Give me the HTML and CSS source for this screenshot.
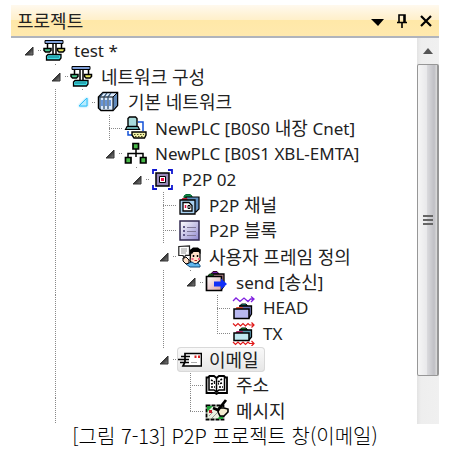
FILE: index.html
```html
<!DOCTYPE html>
<html lang="ko">
<head>
    <meta charset="UTF-8">
    <meta name="viewport" content="width=device-width, initial-scale=1.0">
    <title>프로젝트</title>
    <link rel="stylesheet" href="styles.css">
</head>
<body>
    <svg class="defs" aria-hidden="true">
        <defs>
            <linearGradient id="arrow-dark" x1="0" y1="0" x2="1" y2="1">
                <stop offset="0.4" stop-color="#222"/>
                <stop offset="1" stop-color="#888"/>
            </linearGradient>
            <linearGradient id="lilac" x1="0" y1="0" x2="1" y2="1">
                <stop offset="0" stop-color="#fff"/>
                <stop offset="1" stop-color="#9088d0"/>
            </linearGradient>
            <linearGradient id="pink" x1="0" y1="0" x2="1" y2="1">
                <stop offset="0" stop-color="#fff"/>
                <stop offset="1" stop-color="#d8a0a4"/>
            </linearGradient>
            <symbol id="toggle" viewBox="0 0 10 10">
                <path d="M9 1V9H1Z"/>
            </symbol>
            <symbol id="toggle-dark" viewBox="0 0 10 10">
                <path d="M9 1V9H1Z" fill="url(#arrow-dark)"/>
            </symbol>
            <symbol id="scales" viewBox="0 0 24 24">
                <path d="M2 1.500h18v3H2Z" fill="#7f9fd8" stroke="#000"/>
                <path d="M10 5v10M13 5v10M4.500 5v4M18.500 5v4" stroke="#000" stroke-width="1.500"/>
                <path d="M1 9.500h7v2L6.500 13h-4L1 11.500Z" fill="#4cc890" stroke="#000" stroke-width="1.500"/>
                <path d="M14.500 9.500h7v2L20 13h-4l-1.500-1.500Z" fill="#e8e860" stroke="#000" stroke-width="1.500"/>
                <path d="M5 15.500h13V19l-1.500 2h-13V17Z" fill="#40e0e8" stroke="#000" stroke-width="1.300"/>
                <path d="M5 18h11" stroke="#107080"/>
            </symbol>
        </defs>
    </svg>

    <div class="panel">
        <div class="panel-header">
            <h1>프로젝트</h1>
            <div class="panel-buttons">
                <button type="button" aria-label="메뉴"><svg width="14" height="14" viewBox="0 0 14 14"><path d="M0 5h13L7 12Z"/></svg></button>
                <button type="button" aria-label="고정"><svg width="12" height="14" viewBox="0 0 12 14"><path d="M3 8V1h6v7M1 8.500h10M6 9v5M8 1v7" fill="none" stroke="#000" stroke-width="1.600"/></svg></button>
                <button type="button" aria-label="닫기"><svg width="14" height="14" viewBox="0 0 14 14"><path d="M2 2l10 10M12 2L2 12" fill="none" stroke="#000" stroke-width="2.200"/></svg></button>
            </div>
        </div>

        <div class="panel-body">
            <ul class="tree">
                <li>
                    <button type="button" class="cell toggle" aria-label="접기"><svg><use href="#toggle-dark"/></svg></button>
                    <a href="#" class="node"><svg class="icon"><use href="#scales"/></svg><span class="latin">test *</span></a>
                </li>
                <li>
                    <span class="cell"></span>
                    <button type="button" class="cell toggle dot" aria-label="접기"><svg><use href="#toggle-dark"/></svg></button>
                    <a href="#" class="node"><svg class="icon"><use href="#scales"/></svg><span>네트워크 구성</span></a>
                </li>
                <li>
                    <span class="cell"></span><span class="cell line"></span>
                    <button type="button" class="cell toggle dot hot" aria-label="접기"><svg><use href="#toggle"/></svg></button>
                    <a href="#" class="node">
                        <svg class="icon" viewBox="0 0 24 24">
                            <path d="M1.500 7L6 2.500h14.500v13L16 20.500H4L1.500 18Z" fill="#dcecff" stroke="#000" stroke-width="1.500"/>
                            <path d="M16 7l4-4v12l-4 5Z" fill="#6088b8"/>
                            <path d="M2 7h14v13M16 7l4-4" fill="none" stroke="#000"/>
                            <path d="M6 3L3 7v12M10 3L7 7v12M14 3l-3 4v12" fill="none" stroke="#284868" stroke-width="1.200"/>
                            <path d="M5 10v6M9 10v6M13 10v6" stroke="#4078d0" stroke-width="1.500"/>
                        </svg>
                        <span>기본 네트워크</span>
                    </a>
                </li>
                <li>
                    <span class="cell"></span><span class="cell line"></span><span class="cell"></span>
                    <span class="cell line branch"></span>
                    <a href="#" class="node">
                        <svg class="icon" viewBox="0 0 24 24">
                            <path d="M14 6h5v9M4 15v4h4" fill="none" stroke="#1050d8" stroke-width="1.500"/>
                            <path d="M4 2.500L5.500 1h6L13 2.500v8H4Z" fill="#a8dcdc" stroke="#000" stroke-width="1.400"/>
                            <path d="M3 10.500h11l1.500 3h-14Z" fill="#68a8a8" stroke="#000" stroke-width="1.200"/>
                            <path d="M8 16h14v3L20.500 22H10l-2-3Z" fill="#f0f0a8" stroke="#000" stroke-width="1.400"/>
                            <path d="M10 18.500h10M11 20.500h8" stroke="#505020" stroke-dasharray="1.500 1.500"/>
                        </svg>
                        <span><span class="latin">NewPLC [B0S0</span> 내장 <span class="latin">Cnet]</span></span>
                    </a>
                </li>
                <li>
                    <span class="cell"></span><span class="cell line"></span><span class="cell"></span>
                    <button type="button" class="cell toggle" aria-label="접기"><svg><use href="#toggle-dark"/></svg></button>
                    <a href="#" class="node">
                        <svg class="icon" viewBox="0 0 24 24">
                            <path d="M12 7v8M4 16v-4.500h15V16" fill="none" stroke="#000" stroke-width="1.500"/>
                            <path d="M9 1.500h5.500V7H9ZM1.500 15.500H7V21H1.500ZM16.500 15.500H22V21H16.500Z" fill="#48b848" stroke="#000" stroke-width="1.700"/>
                        </svg>
                        <span class="latin">NewPLC [B0S1 XBL-EMTA]</span>
                    </a>
                </li>
                <li>
                    <span class="cell"></span><span class="cell line"></span><span class="cell"></span><span class="cell"></span>
                    <button type="button" class="cell toggle dot" aria-label="접기"><svg><use href="#toggle-dark"/></svg></button>
                    <a href="#" class="node">
                        <svg class="icon" viewBox="0 0 24 24">
                            <path d="M2 6V2h4M17 2h4v4M21 17v4h-4M6 21H2v-4" fill="none" stroke="#1018d0" stroke-width="1.800"/>
                            <path d="M5 5h13v13H5Z" fill="#9888b8" stroke="#000" stroke-width="1.500"/>
                            <path d="M8.500 8.500h6v6h-6Z" fill="#fff" stroke="#000"/>
                            <path d="M10 10h3v3h-3Z" fill="#f01048"/>
                        </svg>
                        <span class="latin">P2P 02</span>
                    </a>
                </li>
                <li>
                    <span class="cell"></span><span class="cell line"></span><span class="cell"></span><span class="cell"></span><span class="cell"></span>
                    <span class="cell line branch"></span>
                    <a href="#" class="node">
                        <svg class="icon" viewBox="0 0 24 24">
                            <path d="M6 5V3l2-1.500h4L14 3v2Z" fill="#109048" stroke="#063" />
                            <path d="M8 4h13v12l-3 3H8Z" fill="#6090c0" stroke="#000" stroke-width="1.200"/>
                            <path d="M3 7l1.500-2H9l1 2Z" fill="#c02038"/>
                            <path d="M2 7h15v14H2Z" fill="#a8d0f0" stroke="#000" stroke-width="1.300"/>
                            <path d="M5 9.500h6l3 3V18H5Z" fill="#fff" stroke="#000" stroke-width="1.300"/>
                            <path d="M7.500 12v3" stroke="#e01040" stroke-width="1.500"/>
                            <path d="M10 12.500h2v3h-2Z" fill="none" stroke="#000"/>
                        </svg>
                        <span><span class="latin">P2P</span> 채널</span>
                    </a>
                </li>
                <li>
                    <span class="cell"></span><span class="cell line"></span><span class="cell"></span><span class="cell"></span><span class="cell"></span>
                    <span class="cell line branch"></span>
                    <a href="#" class="node">
                        <svg class="icon" viewBox="0 0 24 24">
                            <path d="M2 2h19v19H2Z" fill="url(#lilac)" stroke="#302850" stroke-width="1.500"/>
                            <path d="M5 8h2M5 12h2M5 16h2" stroke="#605888" stroke-width="2"/>
                            <path d="M9 8.500h9M9 12.500h9M9 16.500h9" stroke="#807898"/>
                        </svg>
                        <span><span class="latin">P2P</span> 블록</span>
                    </a>
                </li>
                <li>
                    <span class="cell"></span><span class="cell line"></span><span class="cell"></span><span class="cell"></span><span class="cell"></span>
                    <button type="button" class="cell toggle" aria-label="접기"><svg><use href="#toggle-dark"/></svg></button>
                    <a href="#" class="node">
                        <svg class="icon" viewBox="0 0 24 24">
                            <path d="M13 5l4-1.500 5 1v11l-3 3h-5l-2-3Z" fill="#ffe0c8" stroke="#000" stroke-width="1.200"/>
                            <path d="M12 8V5l3-2.500h5L22.500 5v4l-2-2h-5L14 9Z"/>
                            <path d="M15.500 10v2M19.500 10v2" stroke="#000" stroke-width="1.500"/>
                            <path d="M13.500 14h2M20 14h2" stroke="#f06080" stroke-width="2"/>
                            <path d="M16.500 15.500h2.500" stroke="#c02020"/>
                            <path d="M8 17l3 1 3-1 3 2 3-1 2 2.500v1.500H12l-4-3Z" fill="#60b8f0" stroke="#104878"/>
                            <path d="M5 13l3-1 3 3v3l-3 1-3-3Z" fill="#ffe0c8" stroke="#000"/>
                            <path d="M.8 1.500L11.500.8v9.500H7.500L6 13l-1-2.500H.8Z" fill="#fff" stroke="#222" stroke-width="1.200"/>
                            <path d="M3 4h6M3 6h6M3 8h5" stroke="#999"/>
                        </svg>
                        <span>사용자 프레임 정의</span>
                    </a>
                </li>
                <li>
                    <span class="cell"></span><span class="cell line"></span><span class="cell"></span><span class="cell"></span><span class="cell"></span><span class="cell line"></span>
                    <button type="button" class="cell toggle dot" aria-label="접기"><svg><use href="#toggle-dark"/></svg></button>
                    <a href="#" class="node">
                        <svg class="icon" viewBox="0 0 24 24">
                            <path d="M6 4l2-2.500h4L14 4Z" fill="#7020b0" stroke="#302"/>
                            <path d="M3 6l1.500-2H8l1 2Z" fill="#209030" stroke="#020"/>
                            <path d="M8 4h11v12l-3 4" fill="#b08088" stroke="#000" stroke-width="1.300"/>
                            <path d="M1.500 6.500h15v14h-15Z" fill="url(#pink)" stroke="#000" stroke-width="1.700"/>
                            <path d="M9 11.500h7V8.500l6 5.500-6 5.500v-3H9Z" fill="#1030f8"/>
                        </svg>
                        <span><span class="latin">send [</span>송신<span class="latin">]</span></span>
                    </a>
                </li>
                <li>
                    <span class="cell"></span><span class="cell line"></span><span class="cell"></span><span class="cell"></span><span class="cell"></span><span class="cell line"></span><span class="cell"></span>
                    <span class="cell line branch"></span>
                    <a href="#" class="node">
                        <svg class="icon" viewBox="0 0 24 24">
                            <path d="M1 5l3-3 4 3.500L12 2l4 3.500L18.500 3H22M19 .5L22 3l-3 3" fill="none" stroke="#8020e0" stroke-width="1.300"/>
                            <path d="M8 10l1.500-2H14l1.500 2Z" fill="#20b8a8" stroke="#000"/>
                            <path d="M7 10h12.500v8L17 22" fill="#6870b0" stroke="#000" stroke-width="1.300"/>
                            <path d="M3.500 13l1-2h6l1 2Z" fill="#e05030"/>
                            <path d="M2 13h15v9.500H2Z" fill="#b8b8f0" stroke="#000" stroke-width="1.500"/>
                        </svg>
                        <span class="latin">HEAD</span>
                    </a>
                </li>
                <li>
                    <span class="cell"></span><span class="cell line"></span><span class="cell"></span><span class="cell"></span><span class="cell"></span><span class="cell line"></span><span class="cell"></span>
                    <span class="cell line branch last"></span>
                    <a href="#" class="node">
                        <svg class="icon" viewBox="0 0 24 24">
                            <path d="M1 1.500l2.500 2.500L6 1.500 8.500 4 11 1.500 13.500 4 16 1.500 17.500 3H22M19.500.5L22 3l-2.500 2.500M1 20l2.500 2.500L6 20l2.500 2.500L11 20l2.500 2.500L16 20l1.500 1.500H22M19.500 19l2.500 2.500-2.500 2.500" fill="none" stroke="#e01818" stroke-width="1.200"/>
                            <path d="M8 8l1.500-2H14l1.500 2Z" fill="#20d040" stroke="#000"/>
                            <path d="M7 8h12.500v7L17 18" fill="#5898b0" stroke="#000" stroke-width="1.300"/>
                            <path d="M3.500 11l1-2h6l1 2Z" fill="#b02868"/>
                            <path d="M2 11h15v7.500H2Z" fill="#c0e8f0" stroke="#000" stroke-width="1.500"/>
                        </svg>
                        <span class="latin">TX</span>
                    </a>
                </li>
                <li>
                    <span class="cell"></span><span class="cell line"></span><span class="cell"></span><span class="cell"></span><span class="cell"></span>
                    <button type="button" class="cell toggle dot" aria-label="접기"><svg><use href="#toggle-dark"/></svg></button>
                    <a href="#" class="node selected">
                        <svg class="icon" viewBox="0 0 24 24">
                            <path d="M7 5.500h16.500v12.500H5L7 14Z" fill="#fff" stroke="#000" stroke-width="1.700"/>
                            <path d="M3 8.500h9M0 11.500h11M2 14.500h9" stroke="#000" stroke-width="1.500"/>
                            <path d="M16.500 7.500h2v2.500h-2ZM20 7.500h2v2.500h-2Z" fill="#d82020"/>
                            <path d="M13 14.500h6" stroke="#aaa"/>
                        </svg>
                        <span>이메일</span>
                    </a>
                </li>
                <li>
                    <span class="cell"></span><span class="cell line"></span><span class="cell"></span><span class="cell"></span><span class="cell"></span><span class="cell"></span>
                    <span class="cell line branch"></span>
                    <a href="#" class="node">
                        <svg class="icon" viewBox="0 0 24 24">
                            <path d="M1.500 4.500H3L4.500 3H9l2.500 2L14 3h5l1.500 1.500H22V20H13l-1.500 1L10 20H1.500Z" fill="#fff" stroke="#000" stroke-width="1.800"/>
                            <path d="M4 4v13h5l2.500 2 2.500-2h5.500V4M11.500 5v14" fill="none" stroke="#000" stroke-width="1.500"/>
                            <path d="M6 7l4 2M6 11l4-1M6 14h4M17 6l-4 3M17 10l-4 1M14 14h4" stroke="#000" stroke-width="1.600" stroke-dasharray="2 1"/>
                        </svg>
                        <span>주소</span>
                    </a>
                </li>
                <li>
                    <span class="cell"></span><span class="cell line"></span><span class="cell"></span><span class="cell"></span><span class="cell"></span><span class="cell"></span>
                    <span class="cell line branch last"></span>
                    <a href="#" class="node">
                        <svg class="icon" viewBox="0 0 24 24">
                            <path d="M1.500 6.500h17v14h-17Z" fill="#e8f0e0" stroke="#000" stroke-width="1.800" stroke-dasharray="4 1"/>
                            <path d="M2 7h6L2 13ZM12 20l6-6v6Z" fill="#20a038"/>
                            <path d="M4 17l4-4M7 19l5-5" stroke="#999"/>
                            <path d="M4 11h3v3H4Z" fill="#c01828"/>
                            <path d="M14 9h5l4 1v3l-4 4h-4l-2-4Z" fill="#f4ecd0" stroke="#000" stroke-width="1.600"/>
                            <path d="M8 9l5 2 8-10" fill="none" stroke="#000" stroke-width="2.800"/>
                        </svg>
                        <span>메시지</span>
                    </a>
                </li>
            </ul>

            <div class="scrollbar">
                <button type="button" class="scroll-up" aria-label="위로"><svg width="10" height="6" viewBox="0 0 10 6"><path d="M0 6L5 0l5 6Z" fill="#555"/></svg></button>
                <div class="thumb"><span></span><span></span><span></span></div>
                <div class="track"></div>
            </div>
        </div>
    </div>
    <p class="caption">[그림 7-13] P2P 프로젝트 창(이메일)</p>
</body>
</html>
```
FILE: styles.css
```css
* {
    box-sizing: border-box;
}

body {
    display: flex;
    flex-direction: column;
    min-height: 100vh;
    margin: 0;
    padding: 5px 22px 10px 11px;
    background-color: white;
    color: #222;
    font-family: "Noto Sans", "Noto Sans CJK KR", sans-serif;
    font-size: 18px;
    line-height: 24px;
}

button {
    border: none;
    padding: 0;
    background: none;
    cursor: pointer;
}

.defs {
    position: absolute;
    width: 0;
    height: 0;
}

.panel {
    display: flex;
    flex-direction: column;
    flex: 1;
}

.panel-header {
    display: flex;
    justify-content: space-between;
    align-items: center;
    height: 33px;
    padding: 0 6px;
    border-bottom: 2px solid #b0b4bc;
    background: linear-gradient(#fff9ee, #ffefc8 50%, #ffe8a8 50%, #ffe9ae);
}

h1 {
    margin: 0;
    font-size: 18px;
    font-weight: normal;
}

.panel-buttons {
    display: flex;
    gap: 11px;
}

.panel-buttons button {
    display: flex;
    align-items: center;
}

.panel-body {
    display: flex;
    flex: 1;
}

.tree {
    display: grid;
    grid-auto-rows: 1fr;
    flex: 1;
    margin: 0;
    padding: 0 0 0 4px;
    list-style: none;
}

.tree li {
    display: flex;
    align-items: center;
    white-space: nowrap;
}

.cell {
    display: flex;
    align-self: stretch;
    align-items: center;
    width: 27px;
    background-repeat: no-repeat;
}

/* dotted guides: vertical in the middle of a cell, horizontal towards the icon */
.line {
    background-image: repeating-linear-gradient(#888 0 1px, transparent 1px 2px);
    background-size: 1px 100%;
    background-position: 13px 0;
}

.branch {
    background-image: repeating-linear-gradient(#888 0 1px, transparent 1px 2px), repeating-linear-gradient(90deg, #888 0 1px, transparent 1px 2px);
    background-size: 1px 100%, 14px 1px;
    background-position: 13px 0, 13px 50%;
}

.branch.last {
    background-size: 1px 50%, 14px 1px;
}

.toggle {
    padding-left: 9px;
    background-image: repeating-linear-gradient(90deg, #888 0 1px, transparent 1px 2px);
    background-size: 4px 1px;
    background-position: 23px 50%;
}

.toggle.dot {
    background-image: linear-gradient(#888, #888), repeating-linear-gradient(90deg, #888 0 1px, transparent 1px 2px);
    background-size: 1px 1px, 4px 1px;
    background-position: 13px 0, 23px 50%;
}

.toggle svg {
    width: 10px;
    height: 10px;
    stroke: #333;
}

.toggle.hot svg {
    fill: #b8ecff;
    stroke: #30c0f8;
    filter: drop-shadow(0 0 1px #60d0ff);
}

.node {
    display: flex;
    align-items: center;
    gap: 7px;
    height: 25px;
    padding: 0 6px 0 1px;
    border-radius: 4px;
    color: inherit;
    text-decoration: none;
}

.node.selected {
    background: linear-gradient(#fafafa, #e6e6e6);
    box-shadow: inset 0 0 0 1px #d9d9d9;
}

.latin {
    font-size: 17px;
}

.icon {
    width: 24px;
    height: 24px;
}

.scrollbar {
    display: flex;
    flex-direction: column;
    width: 22px;
    background: linear-gradient(90deg, #e3e3e3, #eee 4px, #f0f0f0);
}

.scroll-up {
    display: flex;
    justify-content: center;
    align-items: center;
    height: 26px;
}

.thumb {
    display: flex;
    flex-direction: column;
    justify-content: center;
    align-items: center;
    gap: 2px;
    flex: 13;
    border: 1px solid #979797;
    border-right-width: 2px;
    border-radius: 2px;
    background: linear-gradient(90deg, #f6f6f6, #e9e9eb 45%, #d9d9dc 50%, #c0c0c5 85%, #dcdcdc);
}

.thumb span {
    width: 10px;
    height: 2px;
    background-color: #666;
}

.track {
    flex: 2;
}

.caption {
    margin: 0;
    color: #000;
    font-family: "Noto Sans CJK KR", sans-serif;
    font-size: 20px;
    font-weight: 300;
    text-align: center;
}
```
